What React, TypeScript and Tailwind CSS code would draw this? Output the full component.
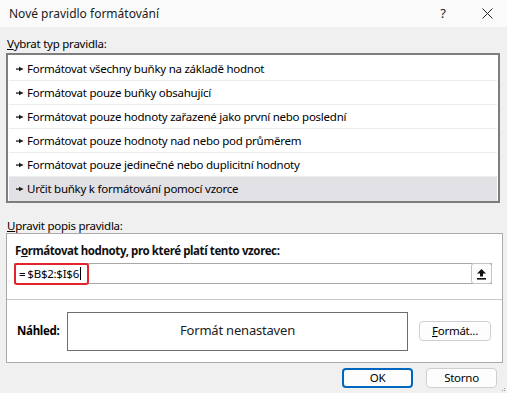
import React from 'react';

const RULES = [
  'Formátovat všechny buňky na základě hodnot',
  'Formátovat pouze buňky obsahující',
  'Formátovat pouze hodnoty zařazené jako první nebo poslední',
  'Formátovat pouze hodnoty nad nebo pod průměrem',
  'Formátovat pouze jedinečné nebo duplicitní hodnoty',
  'Určit buňky k formátování pomocí vzorce',
];
const SELECTED = 5;

function RuleArrow() {
  return (
    <svg width="8" height="6" viewBox="0 0 8 6" className="shrink-0">
      <rect x="0" y="2.4" width="4" height="1.3" fill="#1a1a1a" />
      <path d="M3 0.8 L7.6 3 L3 5.2 Z" fill="#1a1a1a" />
    </svg>
  );
}

function CollapseIcon() {
  return (
    <svg width="11" height="12" viewBox="0 0 11 12">
      <path d="M5.5 1 L10 5.5 L7 5.5 L7 8.5 L4 8.5 L4 5.5 L1 5.5 Z" fill="#111" />
      <rect x="1" y="10" width="9" height="1.6" fill="#111" />
    </svg>
  );
}

export default function App() {
  return (
    <div
      className="w-[507px] h-[393px] bg-[#f0f0f0] flex flex-col text-[11.5px] tracking-[-0.25px] text-black overflow-hidden relative"
      style={{ fontFamily: '"Noto Sans", "Liberation Sans", sans-serif' }}
    >
      {/* Title bar */}
      <div className="h-[27px] bg-[#fafafa] flex items-center pl-[9px] shrink-0 tracking-normal">
        <span className="text-[12px] text-[#1a1a1a]">Nové pravidlo formátování</span>
        <span className="ml-auto text-[13px] text-[#222] mr-[36px]">?</span>
        <svg width="11" height="11" viewBox="0 0 11 11" className="mr-[14px]">
          <path d="M0.5 0.5 L10.5 10.5 M10.5 0.5 L0.5 10.5" stroke="#222" strokeWidth="1" />
        </svg>
      </div>

      <div className="flex flex-col px-[6px] pt-[10px]">
        <div className="h-[14px] leading-[14px] pl-[1px]">
          <span className="underline">V</span>ybrat typ pravidla:
        </div>

        {/* Rule type list */}
        <div className="mt-[2px] w-[494px] h-[150px] border-2 border-[#7d7d7d] bg-white pt-[2px] px-[1px]">
          {RULES.map((rule, i) => (
            <div
              key={rule}
              className={`h-[24px] flex items-center gap-[3px] pl-[7px] ${
                i === SELECTED ? 'bg-[#e1e1e5]' : 'bg-white'
              } ${i < RULES.length - 1 ? 'border-b border-[#ececec]' : ''}`}
            >
              <RuleArrow />
              <span className="leading-none">{rule}</span>
            </div>
          ))}
        </div>

        <div className="mt-[16px] h-[14px] leading-[14px] pl-[1px]">
          <span className="underline">U</span>pravit popis pravidla:
        </div>

        {/* Rule description group */}
        <div className="w-[497px] h-[130px] border border-[#aaaaaa] bg-white flex flex-col">
          <div className="h-[66px] border-b border-[#c8c8c8] flex flex-col px-[7px] pt-[9px]">
            <div className="font-bold tracking-[-0.4px] h-[15px] leading-[15px] pl-[1px] text-[#111]">
              F<span className="underline">o</span>rmátovat hodnoty, pro které platí tento vzorec:
            </div>
            <div className="mt-[5px] h-[21px] w-[478px] border border-[#a8a8a8] flex items-center relative">
              <div className="absolute left-[-1px] top-[-1px] w-[75px] h-[22px] border-2 border-[#e3242b] rounded-[3px]" />
              <span className="pl-[4px] leading-none">=</span>
              <span className="pl-[2px] leading-none">$B$2:$I$6</span>
              <span className="w-px h-[13px] bg-black ml-[1px]" />
              <div className="ml-auto h-[21px] w-[21px] mr-[-1px] border border-[#c4c4c4] rounded-[3px] bg-[#fdfdfd] flex items-center justify-center">
                <CollapseIcon />
              </div>
            </div>
          </div>
          <div className="flex items-center flex-1 pl-[10px]">
            <span className="font-bold tracking-[-0.3px] w-[50px]">Náhled:</span>
            <div className="w-[341px] h-[39px] border border-[#6e6e6e] flex items-center justify-center text-[13px] tracking-[-0.2px] text-[#222]">
              Formát nenastaven
            </div>
            <button className="ml-[11px] w-[72px] h-[20px] border border-[#cfcfcf] rounded-[4px] bg-[#fdfdfd] leading-none">
              <span className="underline">F</span>ormát...
            </button>
          </div>
        </div>

        {/* Dialog buttons */}
        <div className="flex justify-end gap-[13px] mt-[5px] pr-[4px]">
          <button className="w-[71px] h-[20px] border-2 border-[#0067c0] rounded-[4px] bg-[#fdfdfd] leading-none">
            OK
          </button>
          <button className="w-[71px] h-[20px] border border-[#cfcfcf] rounded-[4px] bg-[#fdfdfd] leading-none">
            Storno
          </button>
        </div>
      </div>

      <div className="absolute right-[2px] bottom-[2px] grid grid-cols-3 gap-[1px]">
        <span className="w-px h-px" />
        <span className="w-px h-px" />
        <span className="w-px h-px bg-[#9a9a9a]" />
        <span className="w-px h-px" />
        <span className="w-px h-px bg-[#9a9a9a]" />
        <span className="w-px h-px bg-[#9a9a9a]" />
      </div>
    </div>
  );
}
